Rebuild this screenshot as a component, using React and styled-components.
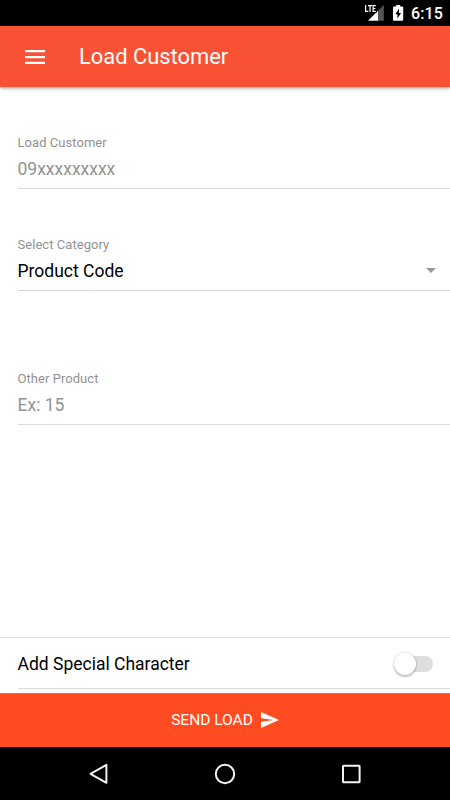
import React from 'react';
import styled, { createGlobalStyle } from 'styled-components';

const Global = createGlobalStyle`
  * { box-sizing: border-box; }
  body { margin: 0; background: #fff; font-family: Roboto, sans-serif; }
`;

const Screen = styled.div`
  display: flex;
  flex-direction: column;
  width: 450px;
  height: 800px;
  overflow: hidden;
  background: #fff;
`;

const StatusBar = styled.div`
  display: flex;
  flex: 0 0 26px;
  height: 26px;
  justify-content: flex-end;
  background: #000;
  color: #fff;
`;

const StatusIcons = styled.svg`
  display: block;
  flex: none;
  width: 46px;
  height: 26px;
`;

const Clock = styled.span`
  width: 39px;
  height: 26px;
  margin-right: 4px;
  padding-left: 4px;
  font-size: 16px;
  line-height: 28px;
  font-weight: 500;
  letter-spacing: 0.15px;
  white-space: nowrap;
`;

const Header = styled.header`
  display: flex;
  flex: 0 0 61px;
  align-items: center;
  padding-left: 25px;
  gap: 34px;
  background: #f95133;
  color: #fff;
  box-shadow: 0 1px 4px rgba(0, 0, 0, 0.42);
`;

const MenuIcon = styled.svg`
  display: block;
  width: 20px;
  height: 14px;
`;

const Title = styled.h1`
  margin: 0;
  padding-top: 1px;
  font-size: 21.9px;
  line-height: 28px;
  font-weight: 400;
`;

const Content = styled.main`
  flex: 1;
  min-height: 0;
`;

const Field = styled.div`
  height: 57px;
  margin-top: ${(p) => p.$gap}px;
  margin-left: 17.5px;
  border-bottom: 1px solid #dadada;
`;

const Label = styled.div`
  height: 22px;
  font-size: 13px;
  line-height: 21px;
  letter-spacing: 0.05px;
  color: #929292;
`;

const Value = styled.div`
  display: flex;
  align-items: center;
  justify-content: space-between;
  height: 30px;
  padding-right: 14px;
  font-size: 17.5px;
  color: ${(p) => (p.$filled ? '#000' : '#929292')};
`;

const Caret = styled.svg`
  display: block;
  width: 10px;
  height: 5px;
  margin-bottom: 2px;
`;

const OptionArea = styled.div`
  flex: 0 0 56px;
  padding-left: 17.5px;
  border-top: 1px solid #e2e2e2;
`;

const Option = styled.label`
  display: flex;
  align-items: center;
  justify-content: space-between;
  height: 51px;
  padding: 1px 17px 0 0;
  border-bottom: 1px solid #dadada;
  font-size: 17.5px;
  color: #000;
`;

const Track = styled.span`
  display: flex;
  align-items: center;
  width: 39px;
  height: 16px;
  margin-top: 1px;
  background: linear-gradient(#dedede, #dedede) right / 31px 16px no-repeat;
  border-radius: 8px;
`;

const Knob = styled.span`
  flex: 0 0 22px;
  height: 22px;
  border-radius: 50%;
  background: #fff;
  box-shadow: 0 2px 2px rgba(0, 0, 0, 0.2), 0 0 3px rgba(0, 0, 0, 0.22);
`;

const SendButton = styled.button`
  display: flex;
  flex: 0 0 54px;
  align-items: center;
  justify-content: center;
  gap: 8px;
  padding: 0 0 1px;
  border: 0;
  border-top: 1px solid #fb6040;
  background: #ff4b20;
  color: #fff;
  font: 400 15.5px/20px Roboto, sans-serif;
`;

const SendIcon = styled.svg`
  display: block;
  width: 18px;
  height: 16px;
`;

const NavBar = styled.nav`
  display: flex;
  flex: 0 0 53px;
  align-items: center;
  justify-content: center;
  gap: 102px;
  background: #000;
`;

const NavIcon = styled.svg`
  display: block;
  width: 24px;
  height: 24px;
  fill: none;
  stroke: #f3f3f3;
  stroke-width: 2;
`;

export default function App() {
  return (
    <>
      <Global />
      <Screen>
        <StatusBar>
          <StatusIcons viewBox="0 0 46 26">
            <path d="M7 20.7L17 10.8v9.9z" fill="#fff" />
            <path d="M17 10.8L22.8 5v15.7H17z" fill="#555" />
            <path d="M3 4h13v8.6H3z" fill="#000" />
            <path
              d="M4.6 5v6.4h2.7M7 5.6h4M9 5.6V12M14.8 5.6h-2.7v5.8h2.7M12 8.5h2.4"
              stroke="#fff"
              strokeWidth="1.2"
              fill="none"
            />
            <path d="M33 6.5h2.2V5h4v1.5h2q1 0 1 1v12.2q0 1-1 1H33q-1 0-1-1V7.5q0-1 1-1z" fill="#fff" />
            <path d="M38 8.8l-3.7 5.4h2.1v4.2l3.7-5.5h-2.1z" fill="#000" />
          </StatusIcons>
          <Clock>6:15</Clock>
        </StatusBar>
        <Header>
          <MenuIcon viewBox="0 0 20 14">
            <path d="M0 1.2h20M0 7.1h20M0 12.9h20" stroke="#fff" strokeWidth="2.2" />
          </MenuIcon>
          <Title>Load Customer</Title>
        </Header>
        <Content>
          <Field $gap={45}>
            <Label>Load Customer</Label>
            <Value>09xxxxxxxxx</Value>
          </Field>
          <Field $gap={45}>
            <Label>Select Category</Label>
            <Value $filled>
              Product Code
              <Caret viewBox="0 0 10 5"><path d="M0 0h10L5 5z" fill="#999" /></Caret>
            </Value>
          </Field>
          <Field $gap={77}>
            <Label>Other Product</Label>
            <Value>Ex: 15</Value>
          </Field>
        </Content>
        <OptionArea>
          <Option>
            Add Special Character
            <Track><Knob /></Track>
          </Option>
        </OptionArea>
        <SendButton>
          SEND LOAD
          <SendIcon viewBox="0 0 18 16">
            <path d="M0 0l18 8L0 16V9.8L12.8 8 0 6.2z" fill="#fff" />
          </SendIcon>
        </SendButton>
        <NavBar>
          <NavIcon viewBox="0 0 24 24"><path d="M19.4 2.8v18L3.5 11.8z" strokeLinejoin="round" /></NavIcon>
          <NavIcon viewBox="0 0 24 24"><circle cx="12" cy="12" r="9.2" /></NavIcon>
          <NavIcon viewBox="0 0 24 24"><rect x="4" y="3.7" width="16.6" height="16.6" rx="0.6" /></NavIcon>
        </NavBar>
      </Screen>
    </>
  );
}
